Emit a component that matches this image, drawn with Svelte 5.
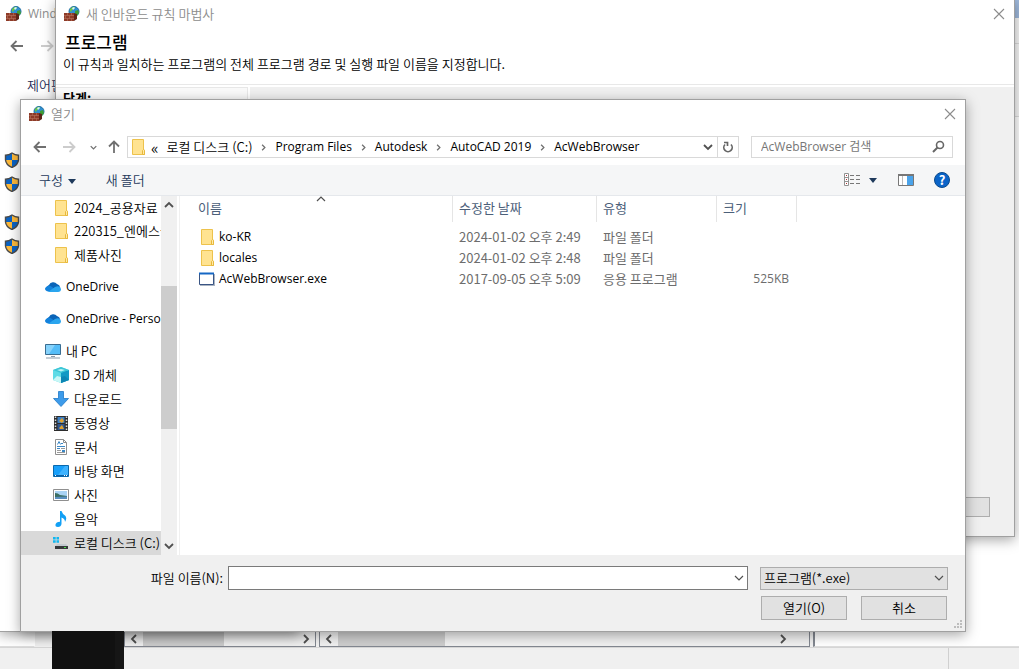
<script lang="ts">
  const crumbs = ["로컬 디스크 (C:)", "Program Files", "Autodesk", "AutoCAD 2019", "AcWebBrowser"];

  const tree = [
    { icon: "folder", label: "2024_공용자료" },
    { icon: "folder", label: "220315_엔에스웍스" },
    { icon: "folder", label: "제품사진" },
    { icon: "cloud", label: "OneDrive", root: true },
    { icon: "cloud", label: "OneDrive - Personal", root: true },
    { icon: "pc", label: "내 PC", root: true },
    { icon: "cube", label: "3D 개체" },
    { icon: "download", label: "다운로드" },
    { icon: "video", label: "동영상" },
    { icon: "doc", label: "문서" },
    { icon: "desktop", label: "바탕 화면" },
    { icon: "photo", label: "사진" },
    { icon: "music", label: "음악" },
    { icon: "disk", label: "로컬 디스크 (C:)" },
  ];

  const files = [
    { icon: "folder", name: "ko-KR", date: "2024-01-02 오후 2:49", type: "파일 폴더", size: "" },
    { icon: "folder", name: "locales", date: "2024-01-02 오후 2:48", type: "파일 폴더", size: "" },
    { icon: "exe", name: "AcWebBrowser.exe", date: "2017-09-05 오후 5:09", type: "응용 프로그램", size: "525KB" },
  ];

  let selected = $state("로컬 디스크 (C:)");
  let fileName = $state("");
  let search = $state("");

  // names without Hangul are set in the latin face
  const isLatin = (text: string) => !/[가-힣]/.test(text);
</script>

{#snippet icon(name: string)}
  <svg class="icon" width="16" height="16" viewBox="0 0 16 16" aria-hidden="true">
    {#if name === "folder"}
      <path d="M2.500.5h11v10l1 .5v4.500h-12z" fill="#ffe391" stroke="#edc24c" />
      <path d="M12.500 15.500v-4l1-1 1 1v4z" fill="#ffeaa8" stroke="#e8b93c" />
    {:else if name === "firewall"}
      <circle cx="10" cy="5.500" r="5" fill="#2f8fd0" stroke="#1f6ea0" />
      <path d="M6 3q3-3 5-2l-1 2-2 1-1 2-1-1z" fill="#6cc644" />
      <path d="M11 5l3-1 1 3-2 3-2-2z" fill="#3f9e35" />
      <path d="M8 2l2-1 1 1-2 2z" fill="#d6f2ff" />
      <path d="M0 7h10v8H0z" fill="#8e3b28" />
      <path d="M10 7l3 1v5l-3 2z" fill="#5e2417" />
      <path d="M0 9.500h10M0 12.500h10M3.500 7v2.500M7.500 7v2.500M1.500 9.500v3M5.500 9.500v3M3.500 12.500V15M7.500 12.500V15" stroke="#b87660" stroke-width=".6" />
    {:else if name === "cloud"}
      <path d="M4 12.500a3.500 3.500 0 010-6.500 4.800 4.800 0 018-1 4 4 0 011 7.500z" fill="#0a64b8" />
      <path d="M1 8q3-3 6 0l6 4.500H3.500Q0 12 0 9.500z" fill="#1382dc" />
      <path d="M3 13l7-5q5-2 6 2 0 3-3 3z" fill="#2aa5ee" />
    {:else if name === "pc"}
      <path d="M.5 1.500h15v10H.5z" fill="#55bdf8" stroke="#3a6d91" />
      <path d="M1 2h9L4 11H1z" fill="#86d2fb" />
      <path d="M6 13.500h4M1 15h14" stroke="#8a9baa" />
    {:else if name === "cube"}
      <path d="M0 3l8-3 8 3v10l-8 3-8-3z" fill="#5fdbe6" />
      <path d="M8 5l8-2v10l-8 3z" fill="#1299c4" />
      <path d="M0 3l8-3 8 3-8 3z" fill="#3cc5d6" />
      <path d="M4 3l4-1 4 1-4 1.500z" fill="#b8f5f5" />
      <path d="M0 13l4-4 4 1v6z" fill="#c8f7f6" />
      <path d="M8 10l4-1 4 4-8 3z" fill="#0d86b4" />
    {:else if name === "download"}
      <path d="M5.500.5h5v7h5L8 15.500.5 7.500h5z" fill="#3d9bea" stroke="#1f78c8" stroke-width=".8" />
    {:else if name === "video"}
      <path d="M1 1h14v15H1z" fill="#2c2c2c" />
      <path d="M2.500 1.500V16M13.500 1.500V16" stroke="#ddd" stroke-width="1.500" stroke-dasharray="1.500 1.500" />
      <path d="M4.500 2h7v6h-7z" fill="#3d7fc4" />
      <path d="M4.500 9h7v6h-7z" fill="#30568f" />
      <path d="M6 6l3-3 2 3-2 2zM6 13l3-3 2 4H7z" fill="#e0a22f" />
    {:else if name === "doc"}
      <path d="M2.500.5h8l3 3v12h-11z" fill="#fff" stroke="#8f8f8f" />
      <path d="M10.500.5v3h3" fill="none" stroke="#8f8f8f" />
      <path d="M4.500 5.500l1.500-3 1.500 3M8 4.500h2M4 7.500h8M4 9.500h3" fill="none" stroke="#3b87c5" />
      <path d="M8 9.500h4M4 11.500h4M4 13.500h8" stroke="#9a9a9a" />
      <path d="M9 11h3v2H9z" fill="#3b87c5" />
    {:else if name === "desktop"}
      <path d="M.5 2.500h15v11H.5z" fill="#18a0fb" stroke="#0a69ad" />
      <path d="M12 3h3v9L5 12z" fill="#3fb3ff" />
      <path d="M1 12.500h14" stroke="#0b5fa5" />
      <path d="M2 12.500h1M11 12.500h1M13 12.500h1" stroke="#fff" />
    {:else if name === "photo"}
      <path d="M.5 2.500h15v11H.5z" fill="#fff" stroke="#8f8f8f" />
      <path d="M2 4h12v8H2z" fill="#a9d3f5" />
      <path d="M2 6q3 0 5 2l7 1v3H2z" fill="#3c6f63" />
      <path d="M2 10l12-.5V12H2z" fill="#5a8fc0" />
    {:else if name === "music"}
      <path d="M7 0h1.500q1 3 3.500 4.500 2.500 2.500 0 6.500 0-3.500-3.500-4.500v6.500Q8 16 5 16T2.500 13.500 7 10.700z" fill="#12a0f5" />
    {:else if name === "disk"}
      <path d="M0 2h2.700v2.500H0zM3.500 2H6v2.500H3.500zM0 5.300h2.700v2.500H0zM3.500 5.300H6v2.500H3.500z" fill="#12b7f0" />
      <path d="M4 9h9l2 2H2z" fill="#c3c9cf" />
      <path d="M2 11h13v3H2z" fill="#36383b" />
      <path d="M11 12.500h2" stroke="#49e04a" />
    {:else if name === "exe"}
      <path d="M1 3h15v12H1z" fill="#aab4c2" />
      <path d="M.5 2.500h14v11H.5z" fill="#fff" stroke="#3a5584" />
      <path d="M0 2.500h15" stroke="#1567c4" stroke-width="2" />
    {:else if name === "shield"}
      <path d="M8 1q3 2 6.500 2.200V8q-.5 5-6.500 7.500Q2 13 1.500 8V3.200Q5 3 8 1z" fill="#fdb93a" />
      <path d="M8 1v7H1.500V3.200Q5 3 8 1zM8 8h6.500q-.5 5-6.500 7.500z" fill="#0b63c4" />
      <path d="M8 1q3 2 6.500 2.200V8q-.5 5-6.500 7.500Q2 13 1.500 8V3.200Q5 3 8 1z" fill="none" stroke="#4b4b4b" stroke-width="1.400" />
    {:else if name === "back"}
      <path d="M7.500 3L2.500 8l5 5M2.500 8H14" fill="none" stroke="currentColor" stroke-width="1.800" />
    {:else if name === "forward"}
      <path d="M8.500 3l5 5-5 5M13.500 8H2" fill="none" stroke="currentColor" stroke-width="1.800" />
    {:else if name === "up"}
      <path d="M3 7.500l5-5 5 5M8 2.500V14" fill="none" stroke="currentColor" stroke-width="1.800" />
    {:else if name === "close"}
      <path d="M3 3l10 10M13 3L3 13" stroke="#8c8c8c" stroke-width="1.100" />
    {:else if name === "refresh"}
      <path d="M5 5.500a4.200 4.200 0 106 0M4 3.500h3.500V7" fill="none" stroke="#666" stroke-width="1.700" />
    {:else if name === "search"}
      <circle cx="10" cy="6" r="3.500" fill="none" stroke="#666" stroke-width="1.600" />
      <path d="M7.500 8.500L3 13" stroke="#666" stroke-width="2" />
    {:else if name === "view"}
      <path d="M.5 1.500h4v12h-4zM.5 5.500h4M.5 9.500h4" fill="#fff" stroke="#929292" />
      <path d="M2 3.500h1M2 7.500h1M2 11.500h1" stroke="#a33" />
      <path d="M6 3.500h4M12 3.500h4M6 7.500h4M12 7.500h4M6 11.500h4M12 11.500h4" stroke="#777" />
    {:else if name === "preview"}
      <path d="M.5 2.500h15v11H.5z" fill="#fff" stroke="#777" />
      <path d="M0 3h16" stroke="#777" stroke-width="2" />
      <path d="M4.500 4v9" stroke="#bbb" />
      <path d="M9 4h6v9H9z" fill="#4aa3ea" />
    {/if}
  </svg>
{/snippet}

{#snippet chevron(dir: string)}
  <svg class="chevron {dir}" width="10" height="10" viewBox="0 0 10 10" aria-hidden="true">
    <path d="M1 3l4 4 4-4" fill="none" stroke="currentColor" stroke-width="1.800" />
  </svg>
{/snippet}

<main class="screen">
  <section class="app">
    <div class="app-title"></div>
    <div class="app-menu"></div>
    <div class="app-tools"></div>
    <div class="app-main"></div>
    <div class="app-row">
      <div class="app-left"></div>
      <div class="app-gap"></div>
      <div class="preview"></div>
      <div class="pane first">{@render chevron("left")}<i></i>{@render chevron("right")}</div>
      <div class="pane second">{@render chevron("left")}<i></i>{@render chevron("right")}</div>
      <div class="app-right"></div>
    </div>
    <div class="app-status"><div></div></div>
  </section>

  <section class="window control">
    <header class="title">{@render icon("firewall")}<span class="latin">Wind</span></header>
    <nav class="control-nav">
      <button aria-label="뒤로">{@render icon("back")}</button>
      <button class="off" aria-label="앞으로">{@render icon("forward")}</button>
    </nav>
    <a class="home" href="#home">제어판</a>
    <ul class="shields">
      {#each [0, 1, 2, 3] as n}
        <li>{@render icon("shield")}</li>
      {/each}
    </ul>
  </section>

  <section class="window wizard">
    <header class="title">
      {@render icon("firewall")}<span>새 인바운드 규칙 마법사</span>
      <button aria-label="닫기">{@render icon("close")}</button>
    </header>
    <div class="wizard-head">
      <h1>프로그램</h1>
      <p>이 규칙과 일치하는 프로그램의 전체 프로그램 경로 및 실행 파일 이름을 지정합니다.</p>
    </div>
    <div class="wizard-body">
      <div class="steps">단계:</div>
      <div class="wizard-page"><button class="push" aria-label="취소"></button></div>
    </div>
  </section>

  <section class="window dialog">
    <header class="title">
      {@render icon("firewall")}<span>열기</span>
      <button aria-label="닫기">{@render icon("close")}</button>
    </header>

    <div class="nav">
      <div class="history">
        <button aria-label="뒤로">{@render icon("back")}</button>
        <button class="off" aria-label="앞으로">{@render icon("forward")}</button>
        <button class="recent" aria-label="최근 위치">{@render chevron("small")}</button>
        <button aria-label="위로">{@render icon("up")}</button>
      </div>
      <div class="address">
        {@render icon("folder")}
        <span class="more">«</span>
        {#each crumbs as crumb, i}
          {#if i > 0}{@render chevron("right small")}{/if}
          <a href="#path" class:latin={isLatin(crumb)}>{crumb}</a>
        {/each}
        <button class="drop" aria-label="이전 위치">{@render chevron("down")}</button>
        <button class="refresh" aria-label="새로 고침">{@render icon("refresh")}</button>
      </div>
      <label class="search">
        <input class="latin" type="text" placeholder="AcWebBrowser 검색" aria-label="검색" bind:value={search} />
        {@render icon("search")}
      </label>
    </div>

    <div class="toolbar">
      <button>구성 <i class="caret"></i></button>
      <button>새 폴더</button>
      <span class="spacer"></span>
      <button class="view" aria-label="보기">{@render icon("view")}<i class="caret"></i></button>
      <button class="pane-toggle" aria-label="미리 보기 창">{@render icon("preview")}</button>
      <button class="help" aria-label="도움말">?</button>
    </div>

    <div class="body">
      <ul class="tree">
        {#each tree as item}
          <li class:root={item.root} class:selected={selected === item.label}>
            <button onclick={() => (selected = item.label)}>
              {@render icon(item.icon)}<span class:latin={isLatin(item.label)}>{item.label}</span>
            </button>
          </li>
        {/each}
      </ul>
      <div class="scrollbar">{@render chevron("up")}<i></i>{@render chevron("down")}</div>
      <div class="list">
        <table>
          <thead>
            <tr>
              <th class="name">이름<span class="sort">{@render chevron("up thin")}</span></th>
              <th class="date">수정한 날짜</th>
              <th class="type">유형</th>
              <th class="size">크기</th>
              <th class="rest"></th>
            </tr>
          </thead>
          <tbody>
            {#each files as f}
              <tr>
                <td class="name">
                  <div>{@render icon(f.icon)}<span class:latin={isLatin(f.name)}>{f.name}</span></div>
                </td>
                <td>{f.date}</td>
                <td>{f.type}</td>
                <td class="size latin">{f.size}</td>
                <td></td>
              </tr>
            {/each}
          </tbody>
        </table>
      </div>
    </div>

    <footer>
      <div class="fields">
        <label for="file-name">파일 이름(N):</label>
        <div class="combo">
          <input id="file-name" type="text" bind:value={fileName} />
          <button aria-label="목록">{@render chevron("thin")}</button>
        </div>
        <div class="filter">
          <select aria-label="파일 형식">
            <option>프로그램(*.exe)</option>
          </select>
          {@render chevron("thin")}
        </div>
      </div>
      <div class="actions">
        <button class="push">열기(O)</button>
        <button class="push">취소</button>
      </div>
      <svg class="grip" width="9" height="9" viewBox="0 0 9 9" aria-hidden="true">
        <path d="M6 0h2v2H6zM3 3h2v2H3zM6 3h2v2H6zM0 6h2v2H0zM3 6h2v2H3zM6 6h2v2H6z" fill="#bdbdbd" />
      </svg>
    </footer>
  </section>
</main>

<style>
  :global(body) {
    margin: 0;
    background: #fff;
  }

  .screen {
    position: relative;
    min-height: 100vh;
    overflow: hidden;
    display: flex;
    font: 350 13px/16px "Noto Sans CJK KR", sans-serif;
    color: #000;
  }

  button,
  input,
  select {
    box-sizing: border-box;
    margin: 0;
    padding: 0;
    border: 0;
    background: none;
    font: inherit;
    color: inherit;
    outline: none;
  }

  ul {
    list-style: none;
    margin: 0;
    padding: 0;
  }

  a {
    color: inherit;
    text-decoration: none;
  }

  svg {
    display: block;
    flex: none;
  }

  .latin {
    font: 400 12px/18px "Open Sans", "Noto Sans CJK KR", sans-serif;
  }

  .chevron {
    color: #505050;
  }

  .chevron.up {
    transform: rotate(180deg);
  }

  .chevron.left {
    transform: rotate(90deg);
  }

  .chevron.right {
    transform: rotate(-90deg);
  }

  .chevron.small {
    width: 7px;
    height: 7px;
    color: #707070;
  }

  .chevron.thin path {
    stroke-width: 1.2;
  }

  .window {
    position: absolute;
    box-sizing: border-box;
    background: #fff;
    border: 1px solid #a0a0a0;
    box-shadow: 0 3px 12px rgba(0, 0, 0, 0.35);
  }

  .title {
    display: flex;
    align-items: center;
    gap: 6px;
    height: 27px;
    padding: 0 7px 0 8px;
    color: #8c8c8c;
  }

  .title button {
    margin-left: auto;
  }

  .off {
    opacity: 0.35;
  }

  /* program behind the windows */
  .app {
    flex: 1;
    display: flex;
    flex-direction: column;
    background: #fff;
  }

  .app-title {
    height: 18px;
    background: #9fb9dc;
  }

  .app-menu {
    height: 25px;
    background: #f7f7f7;
    border-bottom: 1px solid #ddd;
  }

  .app-tools {
    height: 72px;
    background: #f7f7f7;
    border-bottom: 1px solid #ddd;
  }

  .app-main {
    flex: 1;
  }

  .app-row {
    display: flex;
    height: 16px;
    background: #f0f0f0;
  }

  .app-left {
    width: 34px;
    background: #fff;
    border-right: 1px solid #fff;
    border-bottom: 1px solid #ddd;
  }

  .app-gap {
    width: 17px;
  }

  .preview {
    position: relative;
    box-sizing: border-box;
    width: 72px;
    height: 38px;
    background: #111;
    border-right: 9px solid #161616;
    z-index: 1;
  }

  .pane {
    box-sizing: border-box;
    display: flex;
    align-items: center;
    gap: 4px;
    padding: 0 4px;
    border: 1px solid #828790;
    border-top: 0;
  }

  .pane i {
    height: 14px;
    background: #cdcdcd;
  }

  .pane .chevron:last-child {
    margin-left: auto;
  }

  .pane.first {
    width: 192px;
  }

  .pane.first i {
    width: 81px;
  }

  .pane.second {
    width: 491px;
    margin-left: 3px;
    padding-right: 21px;
  }

  .pane.second i {
    width: 107px;
  }

  .app-right {
    flex: 1;
    margin-left: 3px;
    background: #fff;
    border-left: 2px solid #828790;
    border-bottom: 1px solid #ddd;
  }

  .app-status {
    display: flex;
    justify-content: flex-end;
    height: 21px;
    background: #f0f0f0;
    border-top: 1px solid #d7d7d7;
  }

  .app-status div {
    width: 70px;
    border-left: 1px solid #d0d0d0;
  }

  .control {
    top: -1px;
    left: -1px;
    width: 300px;
    height: 633px;
  }

  .control .title {
    padding-left: 6px;
  }

  .control-nav {
    display: flex;
    gap: 14px;
    padding: 11px 9px 10px;
    color: #707070;
  }

  .home {
    display: block;
    margin: 13px 27px 0;
    color: #1d2b55;
  }

  .shields {
    display: grid;
    gap: 8px;
    padding: 59px 4px 0;
  }

  .shields li:nth-child(3) {
    margin-top: 14px;
  }

  .wizard {
    top: -1px;
    left: 55px;
    right: 4px;
    height: 538px;
    display: flex;
    flex-direction: column;
  }

  .wizard-head {
    height: 57px;
    border-bottom: 1px solid #e8e8e8;
  }

  h1 {
    margin: 0;
    padding: 5px 9px 0;
    font-size: 17px;
    line-height: 20px;
    font-weight: 500;
  }

  p {
    margin: 0;
    padding: 4px 7px;
  }

  .wizard-body {
    flex: 1;
    display: flex;
    gap: 2px;
    border-top: 2px solid #fff;
    background: #fff;
  }

  .steps {
    width: 184px;
    padding: 2px 0 0 7px;
    font-weight: 700;
    background: #fafafa;
    border-top: 1px solid #e8e8e8;
    border-right: 1px solid #e8e8e8;
  }

  .wizard-page {
    flex: 1;
    display: flex;
    align-items: flex-end;
    justify-content: flex-end;
    padding: 0 24px 19px 0;
    background: #f0f0f0;
  }

  .push {
    width: 86px;
    height: 24px;
    background: #e1e1e1;
    border: 1px solid #adadad;
  }

  .wizard .push {
    height: 20px;
  }

  .dialog {
    top: 99px;
    left: 20px;
    right: 53px;
  }

  .nav {
    display: flex;
    align-items: center;
    gap: 12px;
    height: 22px;
    padding: 9px 12px 7px 11px;
  }

  .history {
    display: flex;
    align-items: center;
    gap: 13px;
    color: #707070;
  }

  .history .recent {
    margin-right: -4px;
  }

  .address,
  .search {
    box-sizing: border-box;
    display: flex;
    align-items: center;
    height: 22px;
    border: 1px solid #d9d9d9;
  }

  .address {
    flex: 1;
    min-width: 0;
    margin-left: -7px;
    padding-left: 2px;
    white-space: nowrap;
  }

  .more {
    margin: 0 8px 0 5px;
    font-size: 16px;
    line-height: 20px;
  }

  .address > .chevron {
    margin: 0 8px;
  }

  .drop {
    margin-left: auto;
    padding-right: 4px;
  }

  .refresh {
    height: 20px;
    padding: 0 2px;
    border-left: 1px solid #d9d9d9;
  }

  .search {
    width: 202px;
    padding: 0 6px 0 9px;
  }

  .search input {
    flex: 1;
    min-width: 0;
  }

  .search input::placeholder {
    color: #767676;
    opacity: 1;
  }

  .toolbar {
    display: flex;
    align-items: center;
    height: 30px;
    padding: 0 15px 0 18px;
    gap: 30px;
    background: #f5f6f7;
    border-bottom: 1px solid #e5e8ec;
    color: #1e395b;
  }

  .caret {
    display: inline-block;
    margin-left: 2px;
    border: 4px solid transparent;
    border-top: 5px solid #1e395b;
    border-bottom: 0;
    vertical-align: middle;
  }

  .spacer {
    flex: 1;
  }

  .view {
    display: flex;
    align-items: center;
    gap: 7px;
    margin-right: -9px;
  }

  .pane-toggle {
    margin-right: -10px;
  }

  .help {
    width: 16px;
    height: 16px;
    border-radius: 50%;
    background: #0a64c8;
    border: 1px solid #0a4a8c;
    color: #fff;
    font-weight: 700;
    line-height: 12px;
  }

  .body {
    display: flex;
    height: 359px;
  }

  .tree {
    width: 140px;
    overflow: hidden;
  }

  .tree button {
    display: flex;
    align-items: center;
    gap: 5px;
    width: 100%;
    height: 24px;
    padding-left: 32px;
    white-space: nowrap;
  }

  .tree li:first-child button {
    height: 23px;
  }

  .tree .root {
    margin-top: 8px;
  }

  .tree .root button {
    padding-left: 24px;
  }

  .tree .selected {
    background: #d9d9d9;
  }

  .scrollbar {
    display: flex;
    flex-direction: column;
    align-items: center;
    width: 16px;
    padding: 4px 0;
    box-sizing: border-box;
    background: #f0f0f0;
  }

  .scrollbar i {
    width: 16px;
    height: 143px;
    margin: 76px 0 auto;
    background: #cdcdcd;
  }

  .list {
    flex: 1;
    min-width: 0;
    margin-left: 2px;
    border-left: 1px solid #f0f0f0;
  }

  table {
    width: 100%;
    table-layout: fixed;
    border-collapse: separate;
    border-spacing: 0;
    white-space: nowrap;
  }

  th,
  td {
    box-sizing: border-box;
    padding: 0 6px;
    text-align: left;
    font-weight: 400;
  }

  th {
    height: 26px;
    padding-bottom: 2px;
    color: #4c607a;
    border-right: 1px solid #e5e5e5;
  }

  th.name {
    position: relative;
    width: 273px;
    padding-left: 18px;
  }

  .sort {
    position: absolute;
    top: -2px;
    left: 50%;
  }

  .date {
    width: 144px;
  }

  .type {
    width: 120px;
  }

  .size {
    width: 80px;
  }

  .rest {
    border: 0;
  }

  td {
    height: 21px;
    color: #6d6d6d;
  }

  td.name {
    padding-left: 19px;
    color: #000;
  }

  td.name div {
    display: flex;
    align-items: center;
    gap: 4px;
  }

  td.size {
    padding-right: 8px;
    text-align: right;
  }

  tbody::before {
    content: "";
    display: block;
    height: 4px;
  }

  footer {
    position: relative;
    padding: 11px 17px 11px 0;
    background: #f0f0f0;
  }

  .fields {
    display: flex;
    align-items: center;
    height: 24px;
  }

  .fields label {
    width: 202px;
    margin-right: 5px;
    text-align: right;
  }

  .combo {
    box-sizing: border-box;
    flex: 1;
    display: flex;
    height: 24px;
    margin-right: 12px;
    padding: 0 3px;
    background: #fff;
    border: 1px solid #7a7a7a;
  }

  .combo input {
    flex: 1;
    min-width: 0;
  }

  .filter {
    display: flex;
    align-items: center;
    width: 188px;
  }

  .filter select {
    appearance: none;
    width: 100%;
    height: 23px;
    padding: 0 3px;
    background: #e1e1e1;
    border: 1px solid #adadad;
  }

  .filter .chevron {
    margin-left: -14px;
  }

  .actions {
    display: flex;
    justify-content: flex-end;
    gap: 14px;
    padding: 6px 1px 0 0;
  }

  .grip {
    position: absolute;
    right: 2px;
    bottom: 2px;
  }
</style>
